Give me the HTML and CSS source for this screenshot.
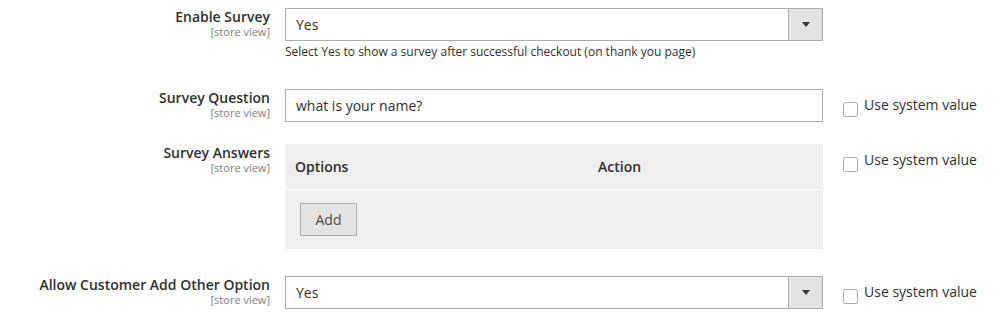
FILE: index.html
```html
<!DOCTYPE html>
<html>
<head>
  <title>Survey Settings</title>
  <link rel="stylesheet" href="styles.css">
</head>
<body>

  <div class="config">

    <div class="row row-first">
      <div class="label">
        <span class="title">Enable Survey</span>
        <span class="scope">[store view]</span>
      </div>
      <div class="value">
        <div class="select">
          <span class="select-text">Yes</span>
          <span class="select-arrow"></span>
        </div>
        <p class="note">Select Yes to show a survey after successful checkout (on thank you page)</p>
      </div>
    </div>

    <div class="row">
      <div class="label">
        <span class="title">Survey Question</span>
        <span class="scope">[store view]</span>
      </div>
      <div class="value">
        <input class="input-text" type="text" value="what is your name?">
      </div>
      <label class="use-default">
        <input class="checkbox" type="checkbox">
        <span>Use system value</span>
      </label>
    </div>

    <div class="row">
      <div class="label">
        <span class="title">Survey Answers</span>
        <span class="scope">[store view]</span>
      </div>
      <div class="value">
        <div class="grid-box">
          <div class="grid-head">
            <span class="col-options">Options</span>
            <span class="col-action">Action</span>
          </div>
          <div class="grid-body">
            <button class="button" type="button">Add</button>
          </div>
        </div>
      </div>
      <label class="use-default">
        <input class="checkbox" type="checkbox">
        <span>Use system value</span>
      </label>
    </div>

    <div class="row">
      <div class="label">
        <span class="title">Allow Customer Add Other Option</span>
        <span class="scope">[store view]</span>
      </div>
      <div class="value">
        <div class="select">
          <span class="select-text">Yes</span>
          <span class="select-arrow"></span>
        </div>
      </div>
      <label class="use-default">
        <input class="checkbox" type="checkbox">
        <span>Use system value</span>
      </label>
    </div>

  </div>

</body>
</html>
```

FILE: styles.css
```css
body {
  margin: 0;
  font-family: 'Open Sans', 'Liberation Sans', sans-serif;
  font-size: 14px;
  color: #303030;
  background-color: #fff;
}

/* one config row: label | value | use default */
.row {
  display: flex;
  align-items: flex-start;
  padding-top: 22px;
}

.row-first {
  padding-top: 8px;
}

.label {
  width: 270px;
  flex-shrink: 0;
  text-align: right;
}

.title {
  display: block;
  font-weight: 600;
  font-size: 14px;
  line-height: 17px;
}

.scope {
  display: block;
  font-size: 11px;
  line-height: 13px;
  color: #808080;
}

.value {
  width: 538px;
  flex-shrink: 0;
  margin-left: 15px;
}

/* fake select box */
.select {
  display: flex;
  height: 33px;
  box-sizing: border-box;
  border: 1px solid #adadad;
  background-color: #fff;
}

.select-text {
  flex: 1;
  padding: 0 10px;
  line-height: 31px;
}

.select-arrow {
  width: 33px;
  display: flex;
  align-items: center;
  justify-content: center;
  border-left: 1px solid #adadad;
  background-color: #e3e3e3;
}

.select-arrow::after {
  content: '';
  border-top: 5px solid #41362f;
  border-left: 4px solid transparent;
  border-right: 4px solid transparent;
}

.input-text {
  display: block;
  width: 100%;
  height: 33px;
  box-sizing: border-box;
  margin: 0;
  padding: 0 10px;
  border: 1px solid #adadad;
  border-radius: 0;
  font-family: inherit;
  font-size: 14px;
  color: #303030;
  outline: none;
}

.note {
  margin: 3px 0 6px;
  font-size: 12px;
  line-height: 1.4;
}

/* answers table */
.grid-box {
  background-color: #efefef;
  margin-bottom: 5px;
}

.grid-head {
  display: flex;
  align-items: center;
  height: 45px;
  border-bottom: 1px solid #fff;
  font-weight: 600;
}

.col-options {
  width: 303px;
  padding-left: 10px;
  box-sizing: border-box;
}

.col-action {
  padding-left: 10px;
}

.grid-body {
  padding: 13px 15px;
}

.button {
  display: block;
  width: 57px;
  height: 33px;
  padding: 0;
  border: 1px solid #adadad;
  border-radius: 0;
  background-color: #e3e3e3;
  color: #514943;
  font-family: inherit;
  font-size: 14px;
  font-weight: normal;
  cursor: pointer;
}

/* use system value checkbox */
.use-default {
  display: flex;
  align-items: flex-start;
  gap: 6px;
  margin-left: 20px;
  padding-top: 7px;
  line-height: 17px;
  white-space: nowrap;
}

.checkbox {
  appearance: none;
  width: 15px;
  height: 15px;
  margin: 6px 0 0;
  border: 1px solid #adadad;
  border-radius: 2px;
  background-color: #fff;
}
```
